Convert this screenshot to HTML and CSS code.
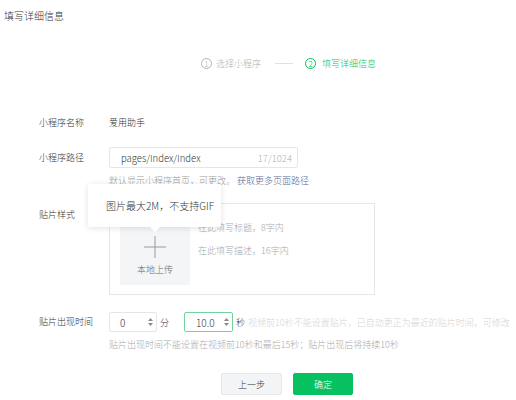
FILE: index.html
```html
<!DOCTYPE html>
<html lang="zh">
<head>
<meta charset="utf-8">
<link rel="stylesheet" href="styles.css">
</head>
<body>
<div class="page">
  <div class="title">填写详细信息</div>
  <div class="steps">
    <span class="step"><span class="num">1</span>选择小程序</span>
    <span class="step-line"></span>
    <span class="step active"><span class="num">2</span>填写详细信息</span>
  </div>
  <div class="form">
    <div class="row row-name">
      <div class="label">小程序名称</div>
      <div class="value">爱用助手</div>
    </div>
    <div class="row row-path">
      <div class="label">小程序路径</div>
      <div class="input path-input"><span class="path-text">pages/Index/Index</span><span class="counter">17/1024</span></div>
    </div>
    <div class="help help-path">默认显示小程序首页，可更改。 <span class="link">获取更多页面路径</span></div>
    <div class="row row-card">
      <div class="label label-top">贴片样式</div>
      <div class="card">
        <div class="upload">
          <svg class="plus" width="22" height="22" viewBox="0 0 22 22"><path d="M11 0V22M0 11H22" stroke="#9a9a9a" stroke-width="1" fill="none"/></svg>
          <div class="upload-text">本地上传</div>
          <div class="popover">图片最大2M，不支持GIF<span class="arrow"></span></div>
        </div>
        <div class="card-texts">
          <div class="card-line">在此填写标题，8字内</div>
          <div class="card-line">在此填写描述，16字内</div>
        </div>
      </div>
    </div>
    <div class="row row-time">
      <div class="label">贴片出现时间</div>
      <div class="input num-input"><span>0</span><span class="spin"><svg width="5" height="8" viewBox="0 0 5 8"><path d="M0 3L2.5 0L5 3Z M0 5L2.5 8L5 5Z" fill="#8a8a8a"/></svg></span></div>
      <span class="unit">分</span>
      <div class="input num-input focus"><span>10.0</span><span class="spin"><svg width="5" height="8" viewBox="0 0 5 8"><path d="M0 3L2.5 0L5 3Z M0 5L2.5 8L5 5Z" fill="#8a8a8a"/></svg></span></div>
      <span class="unit unit-s">秒</span>
      <span class="warn">视频前10秒不能设置贴片，已自动更正为最近的贴片时间，可修改</span>
    </div>
    <div class="help help-time">贴片出现时间不能设置在视频前10秒和最后15秒；贴片出现后将持续10秒</div>
    <div class="buttons">
      <button class="btn btn-default">上一步</button>
      <button class="btn btn-primary">确定</button>
    </div>
  </div>
</div>
</body>
</html>
```
FILE: styles.css
```css
* { box-sizing: border-box; }
html, body { margin: 0; padding: 0; background: #fff; }
body {
  font-family: "Noto Sans CJK SC", sans-serif;
  font-weight: 300;
  color: #353535;
  width: 516px;
  height: 400px;
  overflow: hidden;
}
.page { padding: 10px 0 0 0; }
.title {
  font-size: 10px;
  line-height: 12px;
  padding-left: 4px;
  color: #353535;
}
.steps {
  display: flex;
  align-items: center;
  margin-top: 34px;
  padding-left: 201px;
  height: 14px;
  font-size: 9px;
  color: #b2b2b2;
  white-space: nowrap;
}
.step { display: flex; align-items: center; }
.num {
  width: 11px;
  height: 11px;
  border: 1px solid #b2b2b2;
  border-radius: 50%;
  font-size: 8px;
  line-height: 9px;
  text-align: center;
  margin-right: 4px;
}
.step-line {
  width: 18px;
  height: 1px;
  background: #e0e0e0;
  margin: 0 12px 0 14px;
}
.step.active { color: #07c160; }
.step.active .num { border-color: #07c160; margin-right: 6px; }
.form { padding-left: 39px; }
.row { display: flex; align-items: center; }
.label {
  width: 70px;
  flex: none;
  font-size: 9px;
  line-height: 14px;
  color: #353535;
}
.row-name { margin-top: 46px; font-size: 9px; line-height: 14px; }
.value { color: #353535; }
.row-path { margin-top: 17px; }
.input {
  border: 1px solid #e6e6e6;
  border-radius: 2px;
  display: flex;
  align-items: center;
  background: #fff;
}
.path-input {
  width: 189px;
  height: 21px;
  padding: 0 5px 0 11px;
  justify-content: space-between;
  font-size: 9.5px;
}
.path-text { color: #353535; }
.counter { color: #b2b2b2; font-size: 9.5px; }
.help {
  padding-left: 70px;
  font-size: 9px;
  line-height: 12px;
  color: #9a9a9a;
  white-space: nowrap;
}
.help-path { margin-top: 7px; }
.link { color: #576b95; }
.row-card { margin-top: 16px; align-items: flex-start; }
.label-top { padding-top: 5px; }
.card {
  width: 266px;
  height: 92px;
  border: 1px solid #e7e7e7;
  padding: 9px 10px;
  display: flex;
  align-items: flex-start;
}
.upload {
  position: relative;
  width: 70px;
  height: 72px;
  background: #f4f5f7;
  display: flex;
  flex-direction: column;
  align-items: center;
  padding-top: 23px;
}
.plus { display: block; }
.upload-text {
  margin-top: 6px;
  font-size: 9px;
  line-height: 12px;
  color: #666;
}
.popover {
  position: absolute;
  left: -32px;
  top: -29px;
  width: 133px;
  height: 43px;
  background: #fff;
  box-shadow: 0 1px 6px rgba(0,0,0,0.12);
  border-radius: 2px;
  font-size: 10px;
  line-height: 43px;
  padding-left: 18px;
  color: #353535;
  white-space: nowrap;
}
.arrow {
  position: absolute;
  left: 62px;
  bottom: -5px;
  width: 0;
  height: 0;
  border-left: 5px solid transparent;
  border-right: 5px solid transparent;
  border-top: 5px solid #fff;
}
.card-texts { padding-left: 8px; padding-top: 9px; }
.card-line {
  font-size: 9px;
  line-height: 12px;
  color: #a8a8a8;
  margin-bottom: 11px;
  white-space: nowrap;
}
.row-time { margin-top: 17px; white-space: nowrap; }
.num-input {
  width: 48px;
  height: 20px;
  padding: 0 3px 0 10px;
  justify-content: space-between;
  font-size: 10px;
  color: #353535;
}
.num-input.focus {
  width: 49px;
  border-color: #6fd39c;
  padding-left: 11px;
}
.spin { display: flex; align-items: center; }
.spin svg { display: block; }
.unit {
  font-size: 9px;
  margin: 0 15px 0 3px;
  color: #353535;
}
.unit-s { margin: 0 3px 0 3px; }
.warn {
  font-size: 9px;
  color: #d5d5d5;
}
.help-time { margin-top: 7px; color: #aaa; }
.buttons {
  display: flex;
  gap: 11px;
  margin-top: 22px;
  padding-left: 182px;
}
.btn {
  height: 22px;
  border-radius: 2px;
  font-family: inherit;
  font-weight: 300;
  font-size: 9px;
  padding: 0;
  cursor: pointer;
}
.btn-default {
  width: 61px;
  background: #f3f4f6;
  border: 1px solid #e6e7ea;
  color: #353535;
}
.btn-primary {
  width: 60px;
  background: #07c160;
  border: 1px solid #07c160;
  color: #fff;
}
```
